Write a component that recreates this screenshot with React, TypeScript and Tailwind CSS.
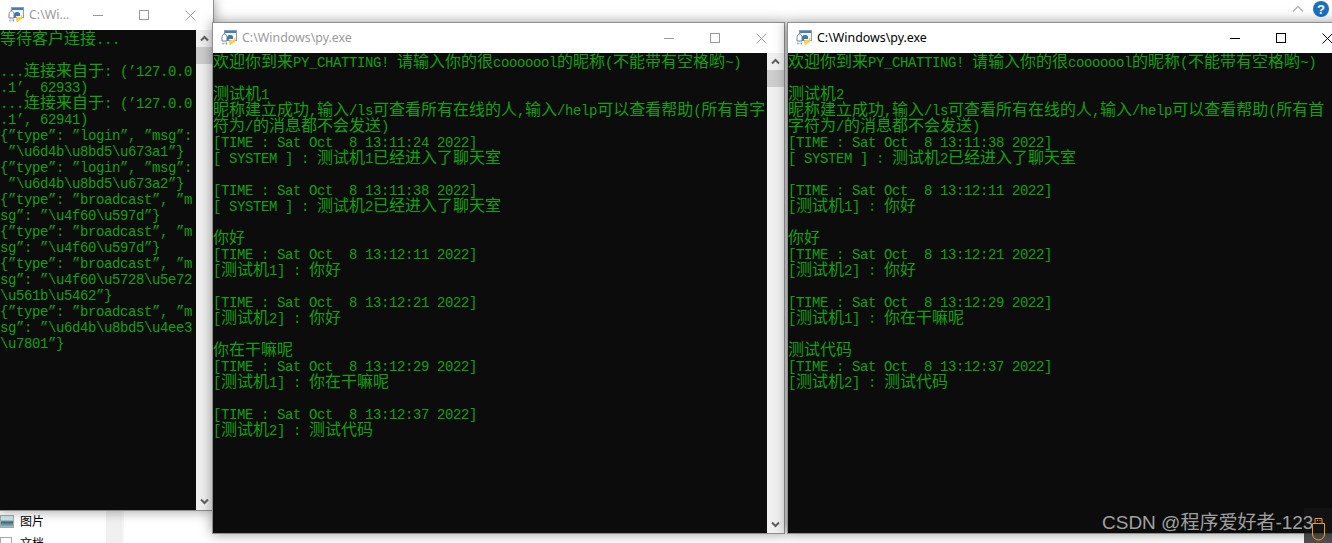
const TIME = (t: string) => `[TIME : Sat Oct  8 13:${t} 2022]`;

const serverLines = [
  "等待客户连接...",
  "",
  "...连接来自于: (’127.0.0",
  ".1’, 62933)",
  "...连接来自于: (’127.0.0",
  ".1’, 62941)",
  "{”type”: ”login”, ”msg”:",
  " ”\\u6d4b\\u8bd5\\u673a1”}",
  "{”type”: ”login”, ”msg”:",
  " ”\\u6d4b\\u8bd5\\u673a2”}",
  "{”type”: ”broadcast”, ”m",
  "sg”: ”\\u4f60\\u597d”}",
  "{”type”: ”broadcast”, ”m",
  "sg”: ”\\u4f60\\u597d”}",
  "{”type”: ”broadcast”, ”m",
  "sg”: ”\\u4f60\\u5728\\u5e72",
  "\\u561b\\u5462”}",
  "{”type”: ”broadcast”, ”m",
  "sg”: ”\\u6d4b\\u8bd5\\u4ee3",
  "\\u7801”}",
];

const WELCOME = "欢迎你到来PY_CHATTING! 请输入你的很cooooool的昵称(不能带有空格哟~)";

const clientOne = [
  WELCOME,
  "",
  "测试机1",
  "昵称建立成功,输入/ls可查看所有在线的人,输入/help可以查看帮助(所有首字",
  "符为/的消息都不会发送)",
  TIME("11:24"),
  "[ SYSTEM ] : 测试机1已经进入了聊天室",
  "",
  TIME("11:38"),
  "[ SYSTEM ] : 测试机2已经进入了聊天室",
  "",
  "你好",
  TIME("12:11"),
  "[测试机1] : 你好",
  "",
  TIME("12:21"),
  "[测试机2] : 你好",
  "",
  "你在干嘛呢",
  TIME("12:29"),
  "[测试机1] : 你在干嘛呢",
  "",
  TIME("12:37"),
  "[测试机2] : 测试代码",
];

const clientTwo = [
  WELCOME,
  "",
  "测试机2",
  "昵称建立成功,输入/ls可查看所有在线的人,输入/help可以查看帮助(所有首",
  "字符为/的消息都不会发送)",
  TIME("11:38"),
  "[ SYSTEM ] : 测试机2已经进入了聊天室",
  "",
  TIME("12:11"),
  "[测试机1] : 你好",
  "",
  "你好",
  TIME("12:21"),
  "[测试机2] : 你好",
  "",
  TIME("12:29"),
  "[测试机1] : 你在干嘛呢",
  "",
  "测试代码",
  TIME("12:37"),
  "[测试机2] : 测试代码",
];

const PyIcon = () => (
  <svg width="16" height="16" viewBox="0 0 16 16" className="shrink-0">
    <rect x="3.5" y="0.5" width="12" height="10" fill="#f4f7fb" stroke="#8c9bb0" />
    <rect x="4" y="1" width="11" height="2" fill="#3f7fc4" />
    <path d="M1 9 C1 5 2 4 3.5 4 C5 4 6 5 6 9 L6 11 L1 11 Z" fill="#fff" stroke="#6b7480" strokeWidth="0.9" />
    <path d="M2 12.5v2M4 12.5v1M5.5 12.5v2" stroke="#5b8fc9" strokeWidth="1" />
    <path d="M6 8 C6 5.5 7.5 5 9.5 5 C11.5 5 12 6 12 7 L12 9 L9 9 C8 9 7.5 9.5 7.5 11 L6 11 Z" fill="#3b78b5" />
    <path d="M14.5 9 C14.5 12 13.5 13 12 13 L10 15 C8.5 15 8 14 8 13 L8 11.5 C8 10.5 9 10 10 10 L13 10 L13 8 L14.5 8 Z" fill="#fcd344" />
  </svg>
);

const TitleButtons = ({ active }: { active?: boolean }) => {
  const color = active ? "#000000" : "#999999";
  return (
    <div className="ml-auto flex h-full shrink-0">
      <div className="flex w-[46px] items-center justify-center">
        <svg width="10" height="10" viewBox="0 0 10 10"><path d="M0 5.5h10" stroke={color} /></svg>
      </div>
      <div className="flex w-[46px] items-center justify-center">
        <svg width="10" height="10" viewBox="0 0 10 10"><rect x="0.5" y="0.5" width="9" height="9" fill="none" stroke={color} /></svg>
      </div>
      <div className="flex w-[46px] items-center justify-center">
        <svg width="11" height="11" viewBox="0 0 11 11"><path d="M0.5 0.5l10 10M10.5 0.5l-10 10" stroke={color} /></svg>
      </div>
    </div>
  );
};

const ScrollBar = () => (
  <div className="flex w-[17px] shrink-0 flex-col items-center bg-[#f0f0f0]">
    <div className="flex h-[17px] w-full items-center justify-center">
      <svg width="9" height="7" viewBox="0 0 9 7"><path d="M1 5.5l3.5-3.5 3.5 3.5" fill="none" stroke="#606060" strokeWidth="2" /></svg>
    </div>
    <div className="h-[17px] w-full bg-[#cdcdcd]" />
    <div className="mt-auto flex h-[17px] w-full items-center justify-center">
      <svg width="9" height="7" viewBox="0 0 9 7"><path d="M1 1.5l3.5 3.5 3.5-3.5" fill="none" stroke="#606060" strokeWidth="2" /></svg>
    </div>
  </div>
);

// latin runs are 8px per cell, cjk runs take two cells, like the console grid
const ConsoleLine = ({ text }: { text: string }) => (
  <div className="flex h-4 whitespace-pre">
    {text.split(/([\u3000-\u9fff\uff00-\uffef]+)/).map((part, i) =>
      i % 2 === 1 ? (
        <span key={i} className="-mt-px h-4 font-['Noto_Sans_CJK_SC',sans-serif] text-[16px] leading-4">
          {part}
        </span>
      ) : (
        <span key={i} className="h-4 pt-0.5 font-['Liberation_Mono',monospace] text-[14px] leading-4 tracking-[-0.4px]">
          {part}
        </span>
      ),
    )}
  </div>
);

type ConsoleWindowProps = {
  className: string;
  title: string;
  lines: string[];
  active?: boolean;
};

const ConsoleWindow = ({ className, title, lines, active }: ConsoleWindowProps) => (
  <div className={`absolute flex flex-col border border-[#8f8f8f] bg-white shadow-[0_0_12px_rgba(0,0,0,0.4)] ${className}`}>
    <div className="flex h-[30px] shrink-0 items-center bg-white pl-2">
      <PyIcon />
      <span className={`ml-[5px] whitespace-nowrap font-['Noto_Sans',sans-serif] text-[12.4px] ${active ? "text-black" : "text-[#9a9a9a]"}`}>
        {title}
      </span>
      <TitleButtons active={active} />
    </div>
    <div className="flex h-[480px] min-h-0">
      <div className="min-w-0 flex-1 overflow-hidden bg-[#0c0c0c] text-[#13a10e]">
        {lines.map((line, i) => (
          <ConsoleLine key={i} text={line} />
        ))}
      </div>
      <ScrollBar />
    </div>
  </div>
);

export default function App() {
  return (
    <div className="relative h-[543px] w-[1332px] overflow-hidden bg-white">
      {/* what is left of the window behind, top right */}
      <div className="absolute right-[3px] top-px flex items-center gap-[9px]">
        <svg width="12" height="8" viewBox="0 0 12 8"><path d="M1 6.5l5-5 5 5" fill="none" stroke="#b8b8b8" strokeWidth="1.5" /></svg>
        <div className="flex size-4 items-center justify-center rounded-full bg-[#1a6fc4] font-['Liberation_Sans',sans-serif] text-[13px] font-bold leading-none text-white">
          ?
        </div>
      </div>

      {/* explorer side panel, bottom left */}
      <div className="absolute left-0 top-[510px] flex h-[33px] w-[124px] border-r-2 border-[#f6f6f6] bg-white">
        <div className="flex-1 font-['Noto_Sans_CJK_SC',sans-serif] text-[12px] text-black">
          <div className="mt-[4px] flex h-[14px] items-center">
            <div className="h-[13px] w-[14px] border border-[#a8a8a8] bg-[linear-gradient(#cfe3f2_35%,#3d6b63_55%,#9cc0dc)]" />
            <span className="ml-[6px] leading-[14px]">图片</span>
          </div>
          <div className="mt-2 flex h-[14px] items-center">
            <div className="h-[13px] w-[12px] border border-[#a8a8a8] bg-white" />
            <span className="ml-2 leading-[14px]">文档</span>
          </div>
        </div>
        <div className="w-4 bg-[#f0f0f0]" />
      </div>

      <ConsoleWindow className="-left-px -top-px w-[215px]" title="C:\Wi..." lines={serverLines} />
      <ConsoleWindow className="left-[212px] top-[22px] w-[573px]" title="C:\Windows\py.exe" lines={clientOne} />
      <ConsoleWindow className="left-[787px] top-[22px] w-[564px]" title="C:\Windows\py.exe" lines={clientTwo} active />

      {/* csdn watermark and the usb tray flyout */}
      <div className="absolute bottom-0 right-0 flex h-[35px] w-7 items-start justify-center bg-[rgba(20,20,20,0.75)]">
        <svg width="15" height="24" viewBox="0 0 15 24" className="mt-[9px]" fill="none" stroke="#f0a020">
          <path d="M4 6V1.5h7V6" />
          <path d="M6 3.5h1M8.5 3.5h1" />
          <path d="M1.5 6.5h12V17a6 6 0 0 1-12 0Z" />
        </svg>
      </div>
      <div className="absolute left-[1102px] top-[511px] whitespace-nowrap font-['Liberation_Sans','Noto_Sans_CJK_SC',sans-serif] text-[19px] leading-6 text-[#a0a0a0]">
        CSDN @程序爱好者-123
      </div>
    </div>
  );
}
